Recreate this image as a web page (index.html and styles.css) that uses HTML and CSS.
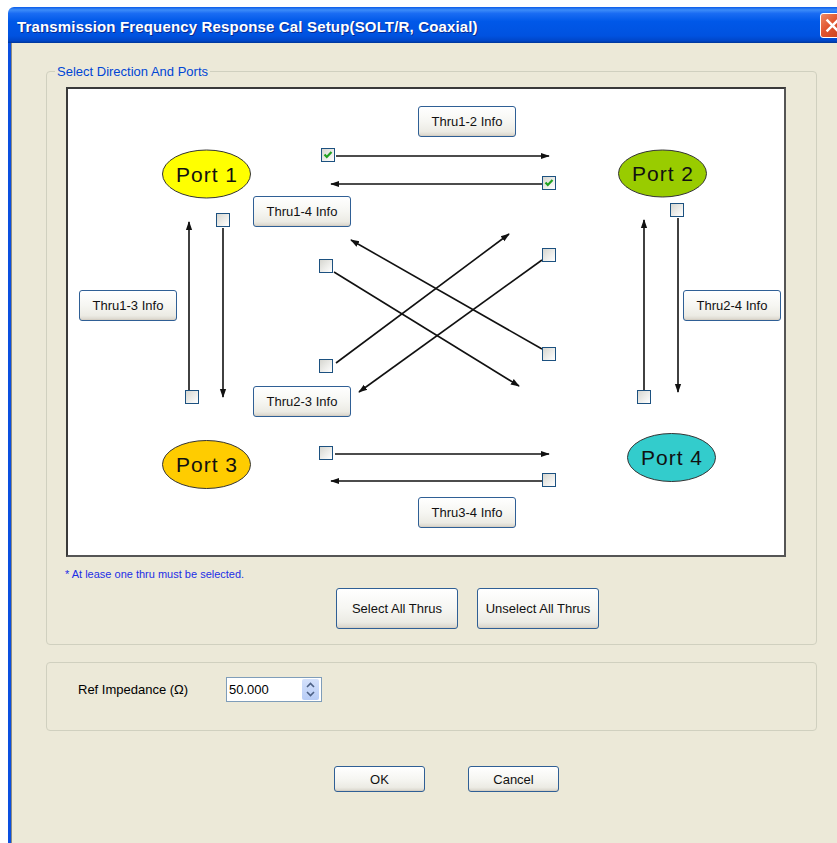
FILE: index.html
```html
<!DOCTYPE html>
<html>
<head>
<meta charset="utf-8">
<title>Transmission Frequency Response Cal Setup</title>
<link rel="stylesheet" href="styles.css">
</head>
<body>
<div class="window">
  <div class="titlebar">
    <span class="title">Transmission Frequency Response Cal Setup(SOLT/R, Coaxial)</span>
    <div class="close-btn">
      <svg width="25" height="25" viewBox="0 0 25 25"><path d="M7 7 L18 18 M18 7 L7 18" stroke="#fff" stroke-width="2.6" stroke-linecap="square"/></svg>
    </div>
  </div>
  <div class="client">
    <div class="group group-ports">
      <span class="group-label">Select Direction And Ports</span>
      <div class="canvas">
        <svg class="wires" width="716" height="466" viewBox="69 89 716 466">
          <defs>
            <marker id="ah" viewBox="0 0 10 10" refX="9" refY="5" markerWidth="9" markerHeight="9" markerUnits="userSpaceOnUse" orient="auto">
              <path d="M0 1.5 L10 5 L0 8.5z" fill="#111"/>
            </marker>
          </defs>
          <g stroke="#111" stroke-width="1.6" marker-end="url(#ah)">
            <line x1="337" y1="156" x2="550" y2="156"/>
            <line x1="543" y1="184" x2="332" y2="184"/>
            <line x1="224" y1="228" x2="224" y2="397"/>
            <line x1="190" y1="390" x2="190" y2="222"/>
            <line x1="679" y1="218" x2="679" y2="392"/>
            <line x1="645" y1="390" x2="645" y2="220"/>
            <line x1="335" y1="272" x2="520" y2="386"/>
            <line x1="543" y1="349" x2="352" y2="240"/>
            <line x1="543" y1="260" x2="360" y2="392"/>
            <line x1="337" y1="363" x2="510" y2="234"/>
            <line x1="336" y1="454" x2="550" y2="454"/>
            <line x1="543" y1="481" x2="332" y2="481"/>
          </g>
          <g class="ports" stroke="#333" stroke-width="1">
            <ellipse cx="207.5" cy="174" rx="44" ry="24" fill="#FFFF00"/>
            <ellipse cx="663.5" cy="173.5" rx="44" ry="23.5" fill="#99CC00"/>
            <ellipse cx="207.5" cy="464.5" rx="44" ry="24" fill="#FFCC00"/>
            <ellipse cx="672.5" cy="457.5" rx="44" ry="24" fill="#33CCCC"/>
          </g>
          <g class="port-text">
            <text x="208" y="182">Port 1</text>
            <text x="664" y="181">Port 2</text>
            <text x="208" y="472">Port 3</text>
            <text x="673" y="465">Port 4</text>
          </g>
        </svg>

        <span class="cb cb-12 checked"><svg width="12" height="12" viewBox="0 0 12 12"><path d="M2.5 5.5 L4.8 8 L9.5 3" fill="none" stroke="#21A121" stroke-width="2.2"/></svg></span>
        <span class="cb cb-21 checked"><svg width="12" height="12" viewBox="0 0 12 12"><path d="M2.5 5.5 L4.8 8 L9.5 3" fill="none" stroke="#21A121" stroke-width="2.2"/></svg></span>
        <span class="cb cb-13"></span>
        <span class="cb cb-31"></span>
        <span class="cb cb-24"></span>
        <span class="cb cb-42"></span>
        <span class="cb cb-14"></span>
        <span class="cb cb-23"></span>
        <span class="cb cb-32"></span>
        <span class="cb cb-41"></span>
        <span class="cb cb-34"></span>
        <span class="cb cb-43"></span>

        <button class="btn info info-12">Thru1-2 Info</button>
        <button class="btn info info-14">Thru1-4 Info</button>
        <button class="btn info info-13">Thru1-3 Info</button>
        <button class="btn info info-23">Thru2-3 Info</button>
        <button class="btn info info-24">Thru2-4 Info</button>
        <button class="btn info info-34">Thru3-4 Info</button>
      </div>
      <p class="note">* At lease one thru must be selected.</p>
      <div class="bulk-row">
        <button class="btn bulk">Select All Thrus</button>
        <button class="btn bulk">Unselect All Thrus</button>
      </div>
    </div>

    <div class="group group-imp">
      <span class="imp-label">Ref Impedance (Ω)</span>
      <div class="spin">
        <span class="spin-value">50.000</span>
        <div class="spin-buttons">
          <svg width="17" height="21" viewBox="0 0 17 21"><path d="M5 8 L8.5 4.5 L12 8 M5 13 L8.5 16.5 L12 13" fill="none" stroke="#4D6185" stroke-width="1.6"/></svg>
        </div>
      </div>
    </div>

    <div class="dialog-buttons">
      <button class="btn dlg">OK</button>
      <button class="btn dlg">Cancel</button>
    </div>
  </div>
</div>
</body>
</html>
```
FILE: styles.css
```css
html, body {
  margin: 0;
  padding: 0;
  background: #ffffff;
  overflow: hidden;
}

body {
  font-family: "Liberation Sans", Arial, sans-serif;
  font-size: 13px;
  color: #000;
}

.window {
  margin: 7px 0 0 8px;
  width: 842px;
}

.titlebar {
  height: 36px;
  display: flex;
  align-items: center;
  padding: 0 5px 0 9px;
  border-radius: 6px 0 0 0;
  background: linear-gradient(#0A5CE9 0%, #3D8CF8 8%, #1A6CF3 18%, #0058E8 40%, #0052E0 80%, #0046C8 94%, #003596 100%);
}

.title {
  font-family: "Liberation Sans", Arial, sans-serif;
  font-weight: bold;
  font-size: 15px;
  letter-spacing: 0.16px;
  color: #fff;
  text-shadow: 1px 1px 0 #0A2A8F;
  padding-top: 3px;
}

.close-btn {
  margin-left: auto;
  width: 25px;
  height: 25px;
  box-sizing: border-box;
  border: 1px solid #fff;
  border-radius: 3px;
  background: linear-gradient(135deg, #F08A64 0%, #E0542E 45%, #C8401C 100%);
  display: flex;
  align-items: center;
  justify-content: center;
}

.close-btn svg {
  display: block;
}

.client {
  background: #ECE9D8;
  border-left: 3px solid #0A4FE0;
  box-shadow: inset 1px 0 0 #8E8C80;
  min-height: 820px;
  padding: 21px 0 0 35px;
  box-sizing: border-box;
}

.group {
  position: relative;
  width: 771px;
  box-sizing: border-box;
  border: 1px solid #D0D0BF;
  border-radius: 4px;
}

.group-ports {
  margin-top: 7px;
  padding: 15px 0 15px 19px;
}

.group-label {
  position: absolute;
  left: 8px;
  top: -8px;
  padding: 0 2px;
  background: #ECE9D8;
  color: #0046D5;
  font-size: 13px;
  line-height: 16px;
}

.canvas {
  position: relative;
  width: 720px;
  height: 470px;
  box-sizing: border-box;
  background: #fff;
  border: 2px solid #3A3A3A;
  border-right-color: #555;
  border-bottom-color: #555;
}

.wires {
  position: absolute;
  left: 0;
  top: 0;
  display: block;
}

.port-text text {
  font-family: "Liberation Sans", Arial, sans-serif;
  font-size: 21px;
  letter-spacing: 1px;
  text-anchor: middle;
  fill: #111;
}

.cb {
  position: absolute;
  width: 14px;
  height: 14px;
  box-sizing: border-box;
  border: 1px solid #1C5180;
  background: linear-gradient(135deg, #D6D6D0 0%, #EDEDEA 55%, #FFFFFF 100%);
  display: flex;
  align-items: center;
  justify-content: center;
}

.cb svg {
  display: block;
}

.cb-12 { left: 253px; top: 59px; }
.cb-21 { left: 474px; top: 87px; }
.cb-13 { left: 148px; top: 124px; }
.cb-31 { left: 117px; top: 301px; }
.cb-24 { left: 602px; top: 114px; }
.cb-42 { left: 569px; top: 301px; }
.cb-14 { left: 251px; top: 170px; }
.cb-23 { left: 474px; top: 159px; }
.cb-32 { left: 251px; top: 270px; }
.cb-41 { left: 474px; top: 258px; }
.cb-34 { left: 251px; top: 357px; }
.cb-43 { left: 474px; top: 384px; }

.btn {
  font-family: "Liberation Sans", Arial, sans-serif;
  font-size: 13px;
  color: #111;
  box-sizing: border-box;
  border: 1px solid #2F5F95;
  border-radius: 3px;
  background: linear-gradient(#FFFFFF 0%, #F6F6F2 50%, #ECEBE4 85%, #D8D4CA 100%);
  box-shadow: inset 0 -1px 0 #D6D0C5;
  padding: 0;
  margin: 0;
  cursor: default;
}

.info {
  position: absolute;
  width: 98px;
  height: 31px;
}

.info-12 { left: 350px; top: 17px; }
.info-14 { left: 185px; top: 107px; }
.info-13 { left: 11px; top: 201px; }
.info-23 { left: 185px; top: 297px; }
.info-24 { left: 615px; top: 201px; }
.info-34 { left: 350px; top: 408px; }

.note {
  margin: 11px 0 0 -1px;
  font-size: 11px;
  line-height: 13px;
  color: #1C2EE6;
}

.bulk-row {
  display: flex;
  gap: 19px;
  margin-top: 7px;
  padding-left: 270px;
}

.bulk {
  width: 122px;
  height: 41px;
}

.group-imp {
  margin-top: 17px;
  height: 69px;
  display: flex;
  align-items: flex-start;
  padding: 14px 0 0 31px;
}

.imp-label {
  width: 148px;
  line-height: 25px;
}

.spin {
  width: 96px;
  height: 25px;
  box-sizing: border-box;
  border: 1px solid #7F9DB9;
  background: #fff;
  display: flex;
  align-items: center;
  padding: 0 2px 0 2px;
}

.spin-value {
  flex: 1;
  font-size: 13px;
}

.spin-buttons {
  width: 17px;
  height: 21px;
  border-radius: 2px;
  background: linear-gradient(#D4E1FB, #B7CCF6);
}

.spin-buttons svg {
  display: block;
}

.dialog-buttons {
  display: flex;
  gap: 43px;
  margin-top: 35px;
  padding-left: 288px;
}

.dlg {
  width: 91px;
  height: 26px;
}
```
